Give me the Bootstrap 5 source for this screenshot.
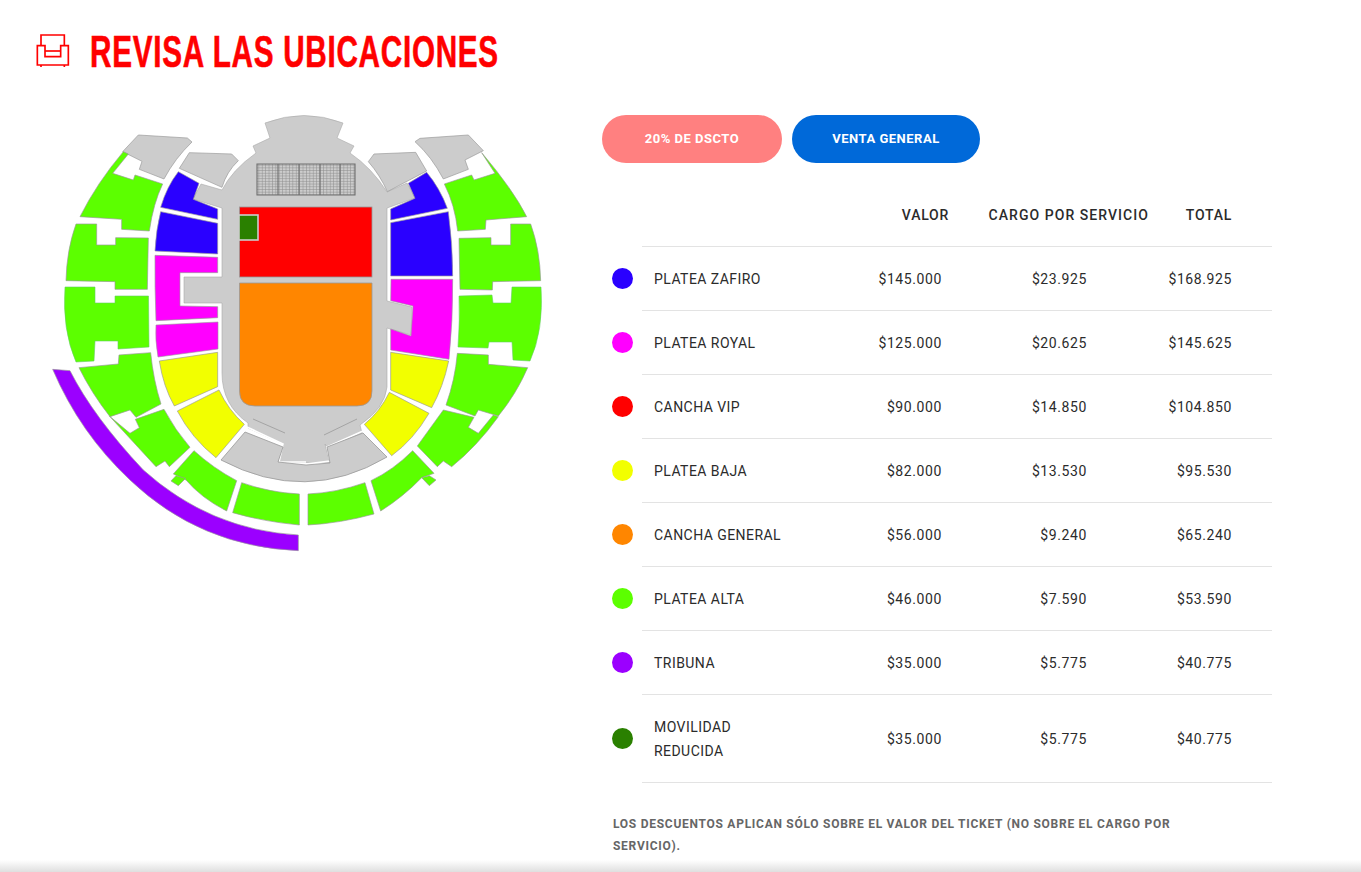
<!DOCTYPE html>
<html lang="es">
<head>
<meta charset="utf-8">
<title>Revisa las ubicaciones</title>
<link href="https://cdn.jsdelivr.net/npm/bootstrap@5.3.0/dist/css/bootstrap.min.css" rel="stylesheet">
<style>
html,body{height:100%;overflow:hidden;background:#fff}
body{font-family:Roboto,"Liberation Sans",sans-serif;color:#222}
.sheet{padding:25px 0 0 30px}
.sec-title{height:50px;gap:10px;margin:0 0 25px}
.sec-title svg{width:50px;height:50px;flex:none}
.sec-title h1{margin:4px 0 0;font:700 44px/50px "Liberation Sans",sans-serif;color:#f00;white-space:nowrap;transform:scaleX(.675);transform-origin:0 50%;-webkit-text-stroke:.6px #f00;letter-spacing:1.05px}
.map-col{width:572px;flex:none}
.map-col svg{display:block;width:520px;height:470px;margin-left:10px}
.side-col{width:670px;flex:none;padding-top:15px}
.tabs-row{gap:10px}
.tab-btn{height:48px;border-radius:24px;border:0;color:#fff;font-size:13px;font-weight:700;letter-spacing:.5px;padding:0}
.tab-pink{width:180px;background:#ff8080}
.tab-blue{width:188px;background:#0069d9}
.tab-pink:hover{background:#ff8080;color:#fff}
.tab-blue:hover{background:#0069d9;color:#fff}
.price-table{width:670px;table-layout:fixed;margin:15px 0 0;border-collapse:collapse;font-size:14px;letter-spacing:.6px;color:#2b2b2b}
.price-table th{height:68px;padding:8px 11px 0 0;text-align:right;font-weight:500;font-size:14px;letter-spacing:.75px;border-bottom:1px solid #e3e3e3;vertical-align:middle}
.price-table th:nth-child(4){letter-spacing:1.05px}
.price-table th:first-child,.price-table td:first-child{border-bottom:0;background:transparent}
.price-table td{height:64px;padding:2px 0 0;text-align:right;border-bottom:1px solid #e3e3e3;vertical-align:middle}
.price-table td:first-child{padding-top:0}
.price-table th:nth-child(5){padding-right:40px}
.price-table td:nth-child(2){text-align:left;padding-left:12px;line-height:24px;letter-spacing:.45px}
.price-table td:nth-child(3){padding-right:18px}
.price-table td:nth-child(4){padding-right:73px}
.price-table td:nth-child(5){padding-right:40px}
.price-table tr.tall td{height:88px}
.swatch{display:block;width:21px;height:21px;border-radius:50%;margin-left:10px}
.fine-note{margin:30px 0 0 11px;width:620px;font-size:12px;font-weight:700;line-height:22px;letter-spacing:.73px;color:#666}
.edge-fade{height:12px;background:linear-gradient(#fff,#dfdfdf)}
.seat-g path,.seat-g rect{stroke:#999;stroke-width:2}
</style>
</head>
<body>
<div class="sheet">
  <div class="sec-title d-flex align-items-center">
    <svg viewBox="0 0 150 150" fill="none" stroke="#f00" stroke-width="5" aria-hidden="true">
      <path d="M33 62V30H103V62"/>
      <path d="M22 62H45V95H92V62H115V120H22Z"/>
      <path d="M45 78H92"/>
      <path d="M33 120V126M103 120V126"/>
    </svg>
    <h1>REVISA LAS UBICACIONES</h1>
  </div>
  <div class="d-flex">
    <div class="map-col">
      <svg viewBox="40 100 520 470" role="img" aria-label="Mapa de ubicaciones">
        <defs>
          <pattern id="gridv" width="3.4" height="4" patternUnits="userSpaceOnUse">
            <path d="M0 0V4" stroke="#8c8c8c" stroke-width="1"/>
          </pattern>
          <pattern id="gridh" width="6" height="2.7" patternUnits="userSpaceOnUse">
            <path d="M0 0H6" stroke="#8c8c8c" stroke-width="1"/>
          </pattern>
        </defs>
        <!-- central body with stage -->
        <path fill="#ccc" stroke="#aaa" stroke-width=".6" d="M265 123Q304 108 343 123L337 138L354 146L350 153Q372 168 387 192L407 183L415 198L387 208V301L412 307L411 335L387 328V387Q385 408 360 425L362 433L327 447L325 444L330 463L278 462L283 445L281 443L248 428L248 423Q222 405 222 373V303H184V277H222V208L193 199L201 184L222 190Q232 170 256 153L253 146L270 138Z"/>
        <path fill="none" stroke="#999" stroke-width=".8" d="M253 419L285 433M357 419L324 435"/>
        <path fill="none" stroke="#fff" stroke-width="1.6" d="M247 427L283 444L279 462H306M363 431L327 447L330 461L306 464"/>
        <!-- stage seats -->
        <rect x="257" y="164" width="98" height="31" fill="url(#gridv)"/>
        <rect x="257" y="164" width="98" height="31" fill="url(#gridh)"/>
        <path fill="none" stroke="#6e6e6e" stroke-width="1.1" d="M257 164H355V195H257ZM278 164V195M299 164V195M320 164V195M340 164V195"/>
        <!-- floor -->
        <rect x="239.500" y="207" width="132.500" height="70" fill="#f00" stroke="#999" stroke-width=".8"/>
        <path fill="#ff8600" stroke="#999" stroke-width=".8" d="M239.500 283H372V391Q372 406 357 406H255Q239.500 406 239.500 391Z"/>
        <rect x="239" y="215" width="19" height="25" fill="#2a8000" stroke="#ccc" stroke-width="1.6"/>
        <!-- outer crescent -->
        <path fill="#ccc" stroke="#999" stroke-width=".8" d="M221 460L245 432L283 447L278 462L306 465L330 463L327 447L363 433L387 457Q306 505 221 460Z"/>

        <g class="seat-g" transform="translate(50 110) scale(.33333)">
          <path fill="#ccc" d="M265 75L412 84L426 96Q375 145 342 207L268 178L276 154L218 125Z"/>
          <path fill="#ccc" d="M388 175L418 128L545 132L565 152Q530 185 516 232Z"/>
          <path fill="#5cff00" stroke="#6c6" d="M220 125Q140 220 90 320L215 328L215 358L298 363Q310 280 338 222L255 195L250 210L188 190L235 132Z"/>
          <path fill="#5cff00" stroke="#6c6" d="M78 342L140 342L140 405L197 405L197 383L295 384L292 538L195 538L195 515L48 512Q50 420 78 342Z"/>
          <path fill="#2a00ff" d="M385 185L447 220L430 268L503 297L503 328L332 292Q350 230 385 185Z"/>
          <path fill="#2a00ff" d="M332 305L503 340L503 432L315 423Q318 360 332 305Z"/>
          <path fill="#f0f" d="M315 436L503 442L503 488L390 488L390 588L503 590L503 623L318 632Q314 530 315 436Z"/>
        </g>
        <g class="seat-g" transform="translate(300 110) scale(.33333)">
          <path fill="#ccc" d="M345 95L360 85L505 75L550 122L495 150L505 178L430 207Q395 140 345 95Z"/>
          <path fill="#ccc" d="M205 155L222 132L347 127L380 183L262 245Q240 195 205 155Z"/>
          <path fill="#5cff00" stroke="#6c6" d="M433 222L515 195L522 210L585 190L545 128Q640 240 680 320L558 330L556 358L473 363Q465 285 433 222Z"/>
          <path fill="#5cff00" stroke="#6c6" d="M477 385L573 383L573 405L632 405L632 342L692 342Q720 420 722 512L578 515L577 540L480 538Z"/>
          <path fill="#2a00ff" d="M325 220L380 187Q420 235 442 295L272 330L272 297L345 265Z"/>
          <path fill="#2a00ff" d="M272 338L445 305Q458 400 458 498L272 498Z"/>
        </g>
        <path fill="#f0f" stroke="#999" stroke-width=".6" d="M391 279.300L452.700 279.300Q453 320 449 359.300L390.700 350V329L411 336L413 306L390.700 300.700Z"/>
        <path fill="#f0f" stroke="#999" stroke-width=".6" d="M156 325L218 322V349L158 357Q155 340 156 325Z"/>
        <path fill="#5cff00" stroke="#6c6" stroke-width=".6" d="M459 296L492 295L493 303L511 303L512 287L541 287Q544 330 530 361L513 360L512 342L489 342L488 348L458 347Q460 320 459 296Z"/>
        <path fill="#5cff00" stroke="#6c6" stroke-width=".6" d="M65 287H95V303H115V296H148.500L149 347L118 349V341H95L94 361L76 362Q62 330 65 287Z"/>

        <g class="seat-g" transform="translate(50 330) scale(.33333)">
          <path fill="#f2ff00" d="M328 93L503 67L503 170L373 228Q340 170 328 93Z"/>
          <path fill="#f2ff00" d="M382 243L507 180Q535 240 583 283L498 383Q425 325 382 243Z"/>
          <path fill="#5cff00" stroke="#6c6" d="M87 113L205 102L207 75L302 68Q310 150 333 222L258 262L240 240L180 260Q125 190 87 113Z"/>
          <path fill="#5cff00" stroke="#6c6" d="M178 258L240 310L268 293L256 268L342 238Q375 300 420 352L358 410L345 393L318 410Z"/>
          <path fill="#5cff00" stroke="#6c6" d="M370 432L432 362Q490 415 560 452L530 543Q455 505 408 450Z"/>
          <path fill="#5cff00" stroke="#6c6" d="M363 453L378 437L407 445L385 467Z"/>
          <path fill="#5cff00" stroke="#6c6" d="M575 458Q660 488 748 492L748 585Q640 575 548 548Z"/>
          <path fill="#9b00ff" stroke="#9b00ff" d="M8 118L60 122Q130 260 280 420Q480 600 745 615L745 662Q450 650 240 450Q90 310 8 118Z"/>
        </g>
        <g class="seat-g" transform="translate(300 330) scale(.33333)">
          <path fill="#f2ff00" d="M272 67L446 93Q430 170 395 233L272 180Z"/>
          <path fill="#f2ff00" d="M268 187L387 250Q340 330 275 377L193 283Q240 245 268 187Z"/>
          <path fill="#5cff00" stroke="#6c6" d="M24 492Q110 488 195 458L222 552Q120 580 24 585Z"/>
          <path fill="#5cff00" stroke="#6c6" d="M213 452Q280 420 338 362L402 430L365 443Q310 500 242 543Z"/>
          <path fill="#5cff00" stroke="#6c6" d="M365 443L388 437L408 450L388 467Z"/>
          <path fill="#5cff00" stroke="#6c6" d="M352 348L430 240L522 262L505 292L535 310L580 255L595 260Q530 350 455 410L430 393L412 410Z"/>
          <path fill="#5cff00" stroke="#6c6" d="M438 225Q465 150 472 70L565 75L565 103L683 113Q650 190 595 258L535 240L525 258Z"/>
        </g>
      </svg>
    </div>
    <div class="side-col">
      <div class="d-flex tabs-row">
        <button type="button" class="btn tab-btn tab-pink">20% DE DSCTO</button>
        <button type="button" class="btn tab-btn tab-blue">VENTA GENERAL</button>
      </div>
      <table class="price-table">
        <colgroup>
          <col style="width:40px"><col style="width:158px"><col style="width:160px"><col style="width:200px"><col style="width:112px">
        </colgroup>
        <thead>
          <tr><th></th><th></th><th>VALOR</th><th>CARGO POR SERVICIO</th><th>TOTAL</th></tr>
        </thead>
        <tbody>
          <tr><td><span class="swatch" style="background:#2a00ff"></span></td><td>PLATEA ZAFIRO</td><td>$145.000</td><td>$23.925</td><td>$168.925</td></tr>
          <tr><td><span class="swatch" style="background:#f0f"></span></td><td>PLATEA ROYAL</td><td>$125.000</td><td>$20.625</td><td>$145.625</td></tr>
          <tr><td><span class="swatch" style="background:#f00"></span></td><td>CANCHA VIP</td><td>$90.000</td><td>$14.850</td><td>$104.850</td></tr>
          <tr><td><span class="swatch" style="background:#f2ff00"></span></td><td>PLATEA BAJA</td><td>$82.000</td><td>$13.530</td><td>$95.530</td></tr>
          <tr><td><span class="swatch" style="background:#ff8600"></span></td><td>CANCHA GENERAL</td><td>$56.000</td><td>$9.240</td><td>$65.240</td></tr>
          <tr><td><span class="swatch" style="background:#5cff00"></span></td><td>PLATEA ALTA</td><td>$46.000</td><td>$7.590</td><td>$53.590</td></tr>
          <tr><td><span class="swatch" style="background:#9b00ff"></span></td><td>TRIBUNA</td><td>$35.000</td><td>$5.775</td><td>$40.775</td></tr>
          <tr class="tall"><td><span class="swatch" style="background:#2a8000"></span></td><td>MOVILIDAD<br>REDUCIDA</td><td>$35.000</td><td>$5.775</td><td>$40.775</td></tr>
        </tbody>
      </table>
      <p class="fine-note">LOS DESCUENTOS APLICAN SÓLO SOBRE EL VALOR DEL TICKET (NO SOBRE EL CARGO POR SERVICIO).</p>
    </div>
  </div>
</div>
<div class="fixed-bottom edge-fade"></div>
<script src="https://cdn.jsdelivr.net/npm/bootstrap@5.3.0/dist/js/bootstrap.bundle.min.js"></script>
</body>
</html>
